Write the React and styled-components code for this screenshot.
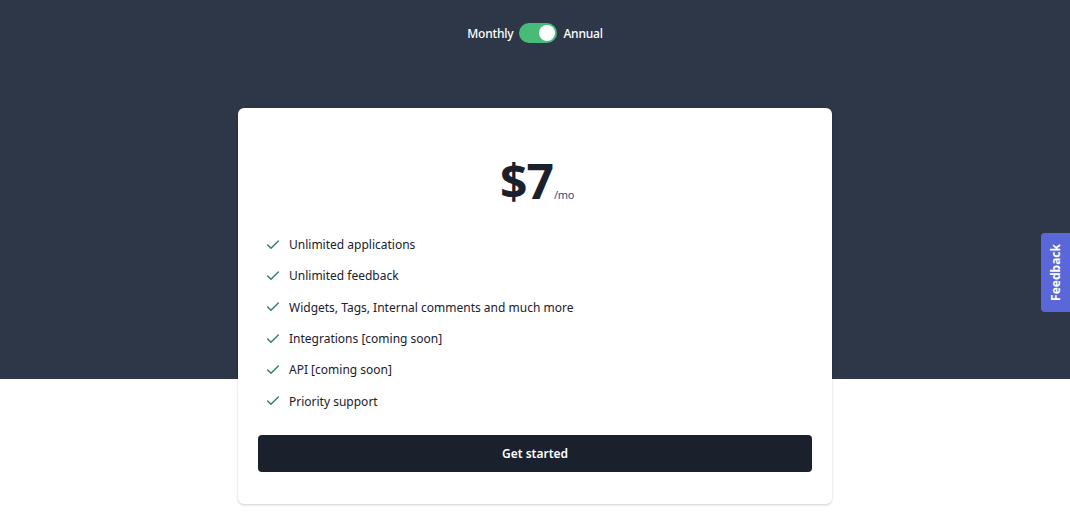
import styled, { createGlobalStyle } from 'styled-components';

const features = [
  'Unlimited applications',
  'Unlimited feedback',
  'Widgets, Tags, Internal comments and much more',
  'Integrations [coming soon]',
  'API [coming soon]',
  'Priority support',
];

const App = () => {
  return (
    <Page>
      <GlobalStyle />
      <Toggle>
        <ToggleLabel>Monthly</ToggleLabel>
        <Switch>
          <Knob />
        </Switch>
        <ToggleLabel>Annual</ToggleLabel>
      </Toggle>
      <Card>
        <Price>
          <Amount>$7</Amount>
          <Per>/mo</Per>
        </Price>
        <List>
          {features.map(f => (
            <Item key={f}>
              <Check />
              <span>{f}</span>
            </Item>
          ))}
        </List>
        <Button>Get started</Button>
      </Card>
      <FeedbackTab>
        <span>Feedback</span>
      </FeedbackTab>
    </Page>
  );
};

export default App;

const Check = () => (
  <svg width='16' height='16' viewBox='0 0 24 24' fill='none' stroke='#2f855a' strokeWidth='2.2' strokeLinecap='round' strokeLinejoin='round'>
    <polyline points='20 6 9 17 4 12' />
  </svg>
);

const GlobalStyle = createGlobalStyle`
  * { box-sizing: border-box; }
  body {
    margin: 0;
    font-family: 'Noto Sans', 'Open Sans', sans-serif;
    background: #ffffff;
  }
`;

const Page = styled.div`
  min-height: 515px;
  background: linear-gradient(to bottom, #2d3748 0, #2d3748 379px, #ffffff 379px);
  padding-top: 23px;
  display: flex;
  flex-direction: column;
  align-items: center;
`;

const Toggle = styled.div`
  display: flex;
  align-items: center;
  gap: 6px;
  height: 20px;
`;

const ToggleLabel = styled.span`
  color: #ffffff;
  font-size: 12px;
  font-weight: 500;
  letter-spacing: -0.2px;
`;

const Switch = styled.div`
  width: 38px;
  height: 20px;
  border-radius: 10px;
  background: #48bb78;
  display: flex;
  align-items: center;
  justify-content: flex-end;
  padding: 2px;
`;

const Knob = styled.div`
  width: 16px;
  height: 16px;
  border-radius: 50%;
  background: #ffffff;
`;

const Card = styled.div`
  width: 594px;
  margin-top: 65px;
  background: #ffffff;
  border-radius: 6px;
  box-shadow: 0 1px 3px rgba(0, 0, 0, 0.12), 0 1px 2px rgba(0, 0, 0, 0.08);
  padding: 42px 20px 32px;
`;

const Price = styled.div`
  display: flex;
  justify-content: center;
  align-items: baseline;
  color: #1a202c;
  padding-left: 4px;
`;

const Amount = styled.span`
  font-size: 48px;
  font-weight: 700;
  line-height: 62px;
  letter-spacing: -1px;
`;

const Per = styled.span`
  font-size: 11px;
  color: #2c5282;
  margin-left: 1px;
  letter-spacing: -0.3px;
`;

const List = styled.ul`
  list-style: none;
  margin: 17px 0 0;
  padding: 0 0 0 7px;
  display: flex;
  flex-direction: column;
`;

const Item = styled.li`
  display: flex;
  align-items: center;
  gap: 8px;
  height: 31.3px;
  font-size: 12px;
  color: #1a202c;
`;

const Button = styled.button`
  margin-top: 18px;
  width: 100%;
  height: 37px;
  border: none;
  border-radius: 4px;
  background: #1a202c;
  color: #ffffff;
  font-family: inherit;
  font-size: 12px;
  font-weight: 600;
`;

const FeedbackTab = styled.div`
  position: fixed;
  right: 0;
  top: 233px;
  width: 29px;
  height: 79px;
  background: #5a67d8;
  border-radius: 4px 0 0 4px;
  display: flex;
  align-items: center;
  justify-content: center;

  span {
    transform: rotate(-90deg);
    color: #ffffff;
    font-size: 12px;
    font-weight: 700;
    white-space: nowrap;
  }
`;
